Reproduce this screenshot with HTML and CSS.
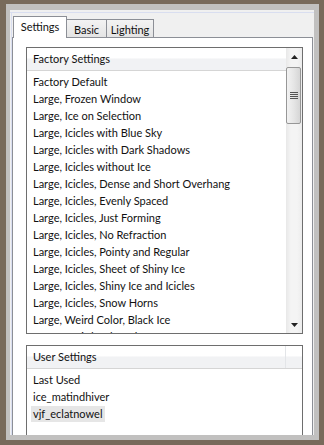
FILE: index.html
```html
<!DOCTYPE html>
<html>
<head>
<meta charset="utf-8">
<link rel="stylesheet" href="styles.css">
</head>
<body>
<div class="outer">
  <div class="window">
    <div class="tabs">
      <div class="tab tab-active tab-settings">Settings</div>
      <div class="tab tab-basic">Basic</div>
      <div class="tab tab-lighting">Lighting</div>
    </div>
    <div class="panel">
      <div class="list list-factory">
        <div class="list-main">
          <div class="list-header"><span class="col">Factory Settings</span></div>
          <ul class="items">
            <li>Factory Default</li>
            <li>Large, Frozen Window</li>
            <li>Large, Ice on Selection</li>
            <li>Large, Icicles with Blue Sky</li>
            <li>Large, Icicles with Dark Shadows</li>
            <li>Large, Icicles without Ice</li>
            <li>Large, Icicles, Dense and Short Overhang</li>
            <li>Large, Icicles, Evenly Spaced</li>
            <li>Large, Icicles, Just Forming</li>
            <li>Large, Icicles, No Refraction</li>
            <li>Large, Icicles, Pointy and Regular</li>
            <li>Large, Icicles, Sheet of Shiny Ice</li>
            <li>Large, Icicles, Shiny Ice and Icicles</li>
            <li>Large, Icicles, Snow Horns</li>
            <li>Large, Weird Color, Black Ice</li>
            <li>Large, Weird Color, Blue Ice</li>
          </ul>
        </div>
        <div class="scrollbar">
          <div class="sb-btn">
            <svg width="7" height="4" viewBox="0 0 7 4"><path d="M3.5 0L7 4H0z" fill="#222"/></svg>
          </div>
          <div class="sb-track">
            <div class="sb-thumb">
              <svg width="8" height="8" viewBox="0 0 8 8"><path d="M0 0.5h8M0 2.5h8M0 4.5h8M0 6.5h8" stroke="#555" stroke-width="1"/></svg>
            </div>
          </div>
          <div class="sb-btn">
            <svg width="7" height="4" viewBox="0 0 7 4"><path d="M0 0H7L3.5 4z" fill="#222"/></svg>
          </div>
        </div>
      </div>
      <div class="list list-user">
        <div class="list-header"><span class="col col-div">User Settings</span><span class="col-rest"></span></div>
        <ul class="items">
          <li>Last Used</li>
          <li>ice_matindhiver</li>
          <li><span class="sel">vjf_eclatnowel</span></li>
        </ul>
      </div>
    </div>
  </div>
</div>
</body>
</html>
```
FILE: styles.css
```css
html, body {
  margin: 0;
  padding: 0;
  height: 445px;
  overflow: hidden;
  background: #786a5b;
}
.outer {
  box-sizing: border-box;
  height: 445px;
  border-style: solid;
  border-color: #786a5b;
  border-width: 4px 5px 5px 6px;
  background: #c1c0bf;
  padding: 6px 5px 5px 4px;
  overflow: hidden;
  font-family: "Lato", "Liberation Sans", sans-serif;
  font-size: 11px;
  color: #111;
}
.window {
  box-sizing: border-box;
  height: 100%;
  overflow: hidden;
  padding: 6px 1px 0 2px;
  background:
    linear-gradient(#f0f0f0 2px, #d9def0 2px, #d9def0 3px, transparent 3px),
    linear-gradient(90deg, #f0f0f0 1px, #d9def0 1px, #d9def0 2px, #f0f0f0 2px);
}
.tabs {
  display: flex;
  align-items: flex-end;
  height: 21px;
  margin-left: 1px;
  position: relative;
  z-index: 1;
}
.tab {
  box-sizing: border-box;
  height: 18px;
  border: 1px solid #8c8f96;
  border-bottom: none;
  background: linear-gradient(#f3f3f3, #e4e4e4);
  text-align: center;
  line-height: 17px;
  padding-top: 1px;
  margin-left: -1px;
}
.tab-settings { width: 54px; margin-left: 0; }
.tab-basic { width: 41px; }
.tab-lighting { width: 48px; }
.tab-active {
  height: 22px;
  background: #fff;
  margin-bottom: -1px;
  line-height: 19px;
  padding-top: 0;
}
.panel {
  box-sizing: border-box;
  height: 420px;
  border: 1px solid #8c8f96;
  background: #fff;
  padding: 9px 9px 0 13px;
}
.list {
  box-sizing: border-box;
  border: 1px solid #6e6e6e;
  background: #fff;
}
.list-factory {
  height: 287px;
  display: flex;
}
.list-main {
  flex: 1;
  overflow: hidden;
  min-width: 0;
}
.list-header {
  height: 22px;
  display: flex;
  border-bottom: 1px solid #d5d5d5;
  background: linear-gradient(#ffffff, #ffffff 45%, #f1f2f4 50%, #f1f2f4);
}
.col {
  padding-left: 6px;
  line-height: 22px;
  white-space: nowrap;
}
.col-div {
  box-sizing: border-box;
  width: 259px;
  border-right: 1px solid #e3e5e8;
}
.col-rest { flex: 1; }
.items {
  list-style: none;
  margin: 0;
  padding: 2px 0 0 0;
}
.items li {
  height: 17px;
  line-height: 17px;
  padding-left: 6px;
  white-space: nowrap;
}
.sel {
  display: inline-block;
  background: #e6e6e6;
  margin-left: -2px;
  padding: 0 3px 0 2px;
  line-height: 16px;
}
.scrollbar {
  width: 16px;
  display: flex;
  flex-direction: column;
  background: linear-gradient(90deg, #e8e8e8, #f4f4f4 30%, #f4f4f4 70%, #ececec);
}
.sb-btn {
  height: 17px;
  display: flex;
  align-items: center;
  justify-content: center;
}
.sb-track {
  flex: 1;
  padding-top: 2px;
}
.sb-thumb {
  box-sizing: border-box;
  width: 15px;
  height: 57px;
  border: 1px solid #979797;
  border-radius: 2px;
  background: linear-gradient(90deg, #f2f2f2, #e6e6e6 50%, #d6d6d6);
  display: flex;
  align-items: center;
  justify-content: center;
}
.list-user {
  margin-top: 11px;
  height: 120px;
}
```
